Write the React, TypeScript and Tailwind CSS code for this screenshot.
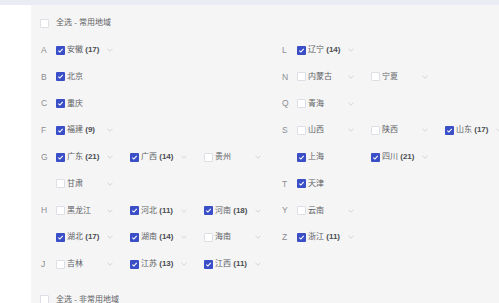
import React from 'react';

type Item = { name: string; count?: number; checked: boolean; arrow?: boolean };
type Row = { letter?: string; items: Item[] };

const leftRows: Row[] = [
  { letter: 'A', items: [{ name: '安徽', count: 17, checked: true, arrow: true }] },
  { letter: 'B', items: [{ name: '北京', checked: true }] },
  { letter: 'C', items: [{ name: '重庆', checked: true }] },
  { letter: 'F', items: [{ name: '福建', count: 9, checked: true, arrow: true }] },
  {
    letter: 'G',
    items: [
      { name: '广东', count: 21, checked: true, arrow: true },
      { name: '广西', count: 14, checked: true, arrow: true },
      { name: '贵州', checked: false, arrow: true },
    ],
  },
  { items: [{ name: '甘肃', checked: false, arrow: true }] },
  {
    letter: 'H',
    items: [
      { name: '黑龙江', checked: false, arrow: true },
      { name: '河北', count: 11, checked: true, arrow: true },
      { name: '河南', count: 18, checked: true, arrow: true },
    ],
  },
  {
    items: [
      { name: '湖北', count: 17, checked: true, arrow: true },
      { name: '湖南', count: 14, checked: true, arrow: true },
      { name: '海南', checked: false, arrow: true },
    ],
  },
  {
    letter: 'J',
    items: [
      { name: '吉林', checked: false, arrow: true },
      { name: '江苏', count: 13, checked: true, arrow: true },
      { name: '江西', count: 11, checked: true, arrow: true },
    ],
  },
];

const rightRows: Row[] = [
  { letter: 'L', items: [{ name: '辽宁', count: 14, checked: true, arrow: true }] },
  {
    letter: 'N',
    items: [
      { name: '内蒙古', checked: false, arrow: true },
      { name: '宁夏', checked: false, arrow: true },
    ],
  },
  { letter: 'Q', items: [{ name: '青海', checked: false, arrow: true }] },
  {
    letter: 'S',
    items: [
      { name: '山西', checked: false, arrow: true },
      { name: '陕西', checked: false, arrow: true },
      { name: '山东', count: 17, checked: true, arrow: true },
    ],
  },
  {
    items: [
      { name: '上海', checked: true },
      { name: '四川', count: 21, checked: true, arrow: true },
    ],
  },
  { letter: 'T', items: [{ name: '天津', checked: true }] },
  { letter: 'Y', items: [{ name: '云南', checked: false, arrow: true }] },
  { letter: 'Z', items: [{ name: '浙江', count: 11, checked: true, arrow: true }] },
];

function Box({ checked }: { checked: boolean }) {
  return checked ? (
    <span className="flex h-[9px] w-[9px] shrink-0 items-center justify-center rounded-[1px] bg-[#3a4fc7]">
      <svg width="7" height="7" viewBox="0 0 7 7">
        <polyline points="1.3,3.6 2.9,5 5.7,1.9" fill="none" stroke="#fff" strokeWidth="1.1" />
      </svg>
    </span>
  ) : (
    <span className="h-[9px] w-[9px] shrink-0 rounded-[1px] border border-[#dcdfe6] bg-white" />
  );
}

function Chevron() {
  return (
    <svg width="6" height="4" viewBox="0 0 6 4" className="shrink-0">
      <polyline points="0.5,0.7 3,3.2 5.5,0.7" fill="none" stroke="#c8cbd2" strokeWidth="0.8" />
    </svg>
  );
}

function Region({ item }: { item: Item }) {
  return (
    <div className="flex w-[74px] items-center">
      <div className="flex w-[57px] items-center">
        <Box checked={item.checked} />
        <span className="ml-[2px] flex-1 whitespace-nowrap text-[#606266]">
          {item.name}
          {item.count !== undefined && (
            <span className="font-bold text-[#4a4c52]"> ({item.count})</span>
          )}
        </span>
        {item.arrow && <Chevron />}
      </div>
    </div>
  );
}

function Column({ rows }: { rows: Row[] }) {
  return (
    <div className="flex w-[241px] shrink-0 flex-col">
      {rows.map((row, i) => (
        <div key={i} className="flex h-[26.75px] items-center">
          <span className="w-[16px] shrink-0 pl-[1px] text-[8.5px] text-[#8a8d93]">{row.letter}</span>
          {row.items.map((item) => (
            <Region key={item.name} item={item} />
          ))}
        </div>
      ))}
    </div>
  );
}

export default function App() {
  return (
    <div
      className="flex h-[303px] w-[499px] flex-col overflow-hidden bg-white text-[8px]"
      style={{ fontFamily: '"Liberation Sans", "Noto Sans CJK SC", sans-serif' }}
    >
      <div className="h-[5px] shrink-0 bg-[#e9ecf2]" />
      <div className="flex flex-1">
        <div className="w-[31px] shrink-0 bg-white" />
        <div className="flex-1 overflow-hidden bg-[#f5f5f5] pl-[9px] pt-[5px]">
          <div className="flex h-[26.75px] items-center">
            <Box checked={false} />
            <span className="ml-[7px] text-[#606266]">全选 - 常用地域</span>
          </div>
          <div className="flex">
            <Column rows={leftRows} />
            <Column rows={rightRows} />
          </div>
          <div className="mt-[9px] flex h-[26.75px] items-center">
            <Box checked={false} />
            <span className="ml-[7px] text-[#606266]">全选 - 非常用地域</span>
          </div>
        </div>
      </div>
    </div>
  );
}
